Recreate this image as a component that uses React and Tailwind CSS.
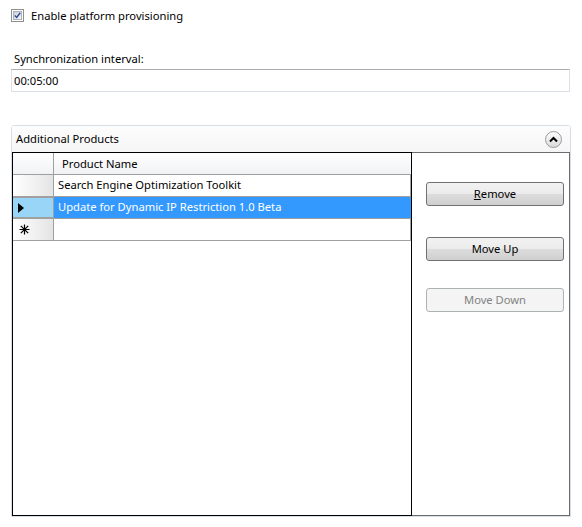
import React from "react";

const font = { fontFamily: '"Noto Sans", "Segoe UI", sans-serif' };

function Checkbox() {
  return (
    <div className="w-[13px] h-[13px] border border-[#8e8f8f] bg-white p-[1px] shrink-0">
      <div className="w-full h-full bg-[linear-gradient(135deg,#cbcfd5,#f6f6f6)] border border-[#aeb3b9] flex items-center justify-center">
        <svg width="9" height="9" viewBox="0 0 9 9">
          <path d="M1 4.5 L3.5 7 L8 1" fill="none" stroke="#2a4b9b" strokeWidth="1.8" />
        </svg>
      </div>
    </div>
  );
}

function Btn({ children, disabled, className = "" }) {
  return (
    <div
      className={
        "w-[138px] h-[24px] rounded-[3px] border flex items-center justify-center " +
        (disabled
          ? "border-[#adb2b5] bg-[#f4f4f4] text-[#838383] "
          : "border-[#707070] bg-[linear-gradient(#f2f2f2_0%,#ebebeb_50%,#dddddd_50%,#cfcfcf_100%)] text-black ") +
        className
      }
    >
      {children}
    </div>
  );
}

export default function App() {
  return (
    <div className="w-[582px] h-[527px] bg-white text-[11.2px] text-black pt-[9px]" style={font}>
      <div className="flex items-center pl-[11px] h-[13px]">
        <Checkbox />
        <span className="ml-[7px] leading-[13px]">Enable platform provisioning</span>
      </div>
      <div className="pl-[14px] mt-[29px] leading-[16px]">Synchronization interval:</div>
      <div className="ml-[11px] mt-[2px] w-[559px] h-[23px] border border-[#dbdfe6] border-t-[#abadb3] flex items-center pl-[2px] leading-[14px]">
        00:05:00
      </div>

      <div className="ml-[11px] mt-[33px] w-[560px] h-[392px] border border-[#d5dfe5] rounded-t-[3px] flex flex-col">
        <div className="h-[26px] shrink-0 flex items-center justify-between pl-[4px] pr-[8px] bg-[linear-gradient(#fdfdfd,#f5f5f5)]">
          <span className="leading-[14px]">Additional Products</span>
          <div className="w-[17px] h-[17px] rounded-full border border-[#9a9a9a] bg-[linear-gradient(#ffffff,#d9d9d9)] flex items-center justify-center">
            <svg width="9" height="7" viewBox="0 0 9 7">
              <path d="M1 5.5 L4.5 2 L8 5.5" fill="none" stroke="#000" strokeWidth="2" />
            </svg>
          </div>
        </div>
        <div className="flex-1 flex">
          <div className="w-[400px] shrink-0 border border-black flex flex-col">
            <div className="flex h-[22px] border-b border-[#a0a0a0]">
              <div className="w-[41px] border-r border-[#a0a0a0] bg-[linear-gradient(#ffffff,#f1f2f4)]" />
              <div className="flex-1 flex items-center pl-[8px] pt-[1px] bg-[linear-gradient(#ffffff,#f1f2f4)]">Product Name</div>
            </div>
            <div className="flex h-[22px] border-b border-[#a0a0a0]">
              <div className="w-[41px] border-r border-[#a0a0a0] bg-[linear-gradient(90deg,#ffffff,#e4e4e4)]" />
              <div className="flex-1 flex items-center pl-[4px] border-r border-[#a0a0a0]">Search Engine Optimization Toolkit</div>
            </div>
            <div className="flex h-[22px] border-b border-[#a0a0a0]">
              <div className="w-[41px] border-r border-[#a0a0a0] bg-[#99d5f6] border-y border-[#5a9bc8] flex items-center pl-[5px]">
                <svg width="6" height="10" viewBox="0 0 6 10">
                  <path d="M0 0 L6 5 L0 10 Z" fill="#000" />
                </svg>
              </div>
              <div className="flex-1 flex items-center pl-[4px] bg-[#3399ff] text-white">Update for Dynamic IP Restriction 1.0 Beta</div>
            </div>
            <div className="flex h-[22px] border-b border-[#a0a0a0]">
              <div className="w-[41px] border-r border-[#a0a0a0] bg-[linear-gradient(90deg,#ffffff,#e4e4e4)] flex items-center pl-[6px]">
                <svg width="11" height="11" viewBox="0 0 11 11">
                  <path d="M5.5 0.5 V10.5 M0.5 5.5 H10.5 M1.8 1.8 L9.2 9.2 M9.2 1.8 L1.8 9.2" stroke="#000" strokeWidth="1.2" />
                </svg>
              </div>
              <div className="flex-1 border-r border-[#a0a0a0]" />
            </div>
            <div className="flex-1" />
          </div>
          <div className="flex-1 border-t border-r border-b border-[#6d6d6d] flex flex-col items-start pl-[14px] pt-[29px]">
            <Btn>
              <span><span className="underline">R</span>emove</span>
            </Btn>
            <Btn className="mt-[31px]">Move Up</Btn>
            <Btn disabled className="mt-[27px]">Move Down</Btn>
          </div>
        </div>
      </div>
    </div>
  );
}
